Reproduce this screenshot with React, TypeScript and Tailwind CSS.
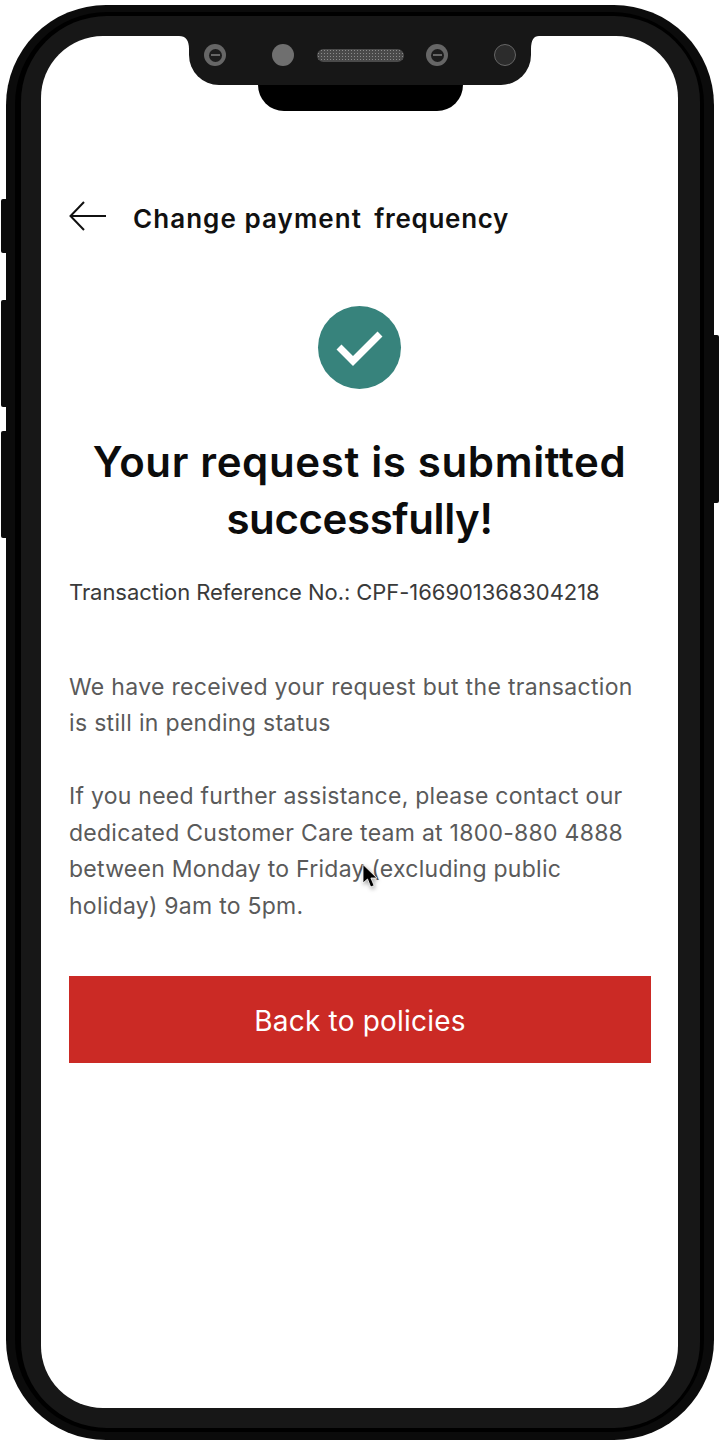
import React from "react";

const font = "font-['Inter','Liberation_Sans',sans-serif]";

const Lens = () => (
  <div className="size-[22px] rounded-full bg-[#666] flex items-center justify-center">
    <div className="size-[13px] rounded-full bg-[#1c1c1c] flex items-center justify-center">
      <div className="w-[9px] h-[2px] bg-[#666]" />
    </div>
  </div>
);

const Notch = () => (
  <div className="absolute left-[148px] top-0 w-[342px]">
    <svg className="absolute -left-[10px] top-0" width="10" height="13" viewBox="0 0 10 13">
      <path d="M0 0H10V13Q10 0 0 0Z" fill="#171717" />
    </svg>
    <svg className="absolute -right-[8px] top-0" width="8" height="13" viewBox="0 0 8 13">
      <path d="M8 0H0V13Q0 0 8 0Z" fill="#171717" />
    </svg>
    <div className="relative z-10 h-[49px] bg-[#171717] rounded-b-[30px] flex items-start pl-[15px] pt-[8px]">
      <Lens />
      <div className="ml-[46px] size-[22px] rounded-full bg-[#6f6f6f]" />
      <div className="ml-[23px] mt-[5px] w-[87px] h-[13px] rounded-full bg-[#4a4a4a] bg-[radial-gradient(#8c8c8c_1px,transparent_1px)] bg-[length:3px_3px]" />
      <div className="ml-[22px]">
        <Lens />
      </div>
      <div className="ml-[46px] size-[22px] rounded-full bg-[#2c2c2c] border border-[#666]" />
    </div>
    <div className="ml-[69px] w-[205px] h-[26px] bg-black rounded-b-[26px]" />
  </div>
);

const Cursor = () => (
  <svg
    className="absolute left-[321px] top-[828px] drop-shadow-[1px_2px_2px_rgba(0,0,0,0.35)]"
    width="16"
    height="25"
    viewBox="0 0 16 25"
  >
    <path d="M1 0.5v18.5l4.5-4 3.2 8 3.4-1.4-3.2-7.6h6z" fill="#000" stroke="#fff" strokeWidth="0.8" />
  </svg>
);

export default function App() {
  return (
    <div className={`${font} w-[722px] h-[1444px] bg-white relative pt-[5px] pl-[6px]`}>
      {/* side buttons */}
      <div className="absolute left-[1px] top-[199px] w-[6px] h-[54px] bg-[#0b0b0b] rounded-l-[2px]" />
      <div className="absolute left-[1px] top-[300px] w-[6px] h-[107px] bg-[#0b0b0b] rounded-l-[2px]" />
      <div className="absolute left-[1px] top-[431px] w-[6px] h-[107px] bg-[#0b0b0b] rounded-l-[2px]" />
      <div className="absolute left-[713px] top-[335px] w-[6px] h-[168px] bg-[#0b0b0b] rounded-r-[2px]" />

      {/* phone frame */}
      <div className="w-[708px] h-[1435px] bg-[#0b0b0b] rounded-[100px] pt-[7px] pb-[8px] pl-[9px] pr-[10px]">
        <div className="w-full h-full bg-black rounded-[92px] pt-[4px] pb-[4px] pl-[6px] pr-[4px]">
          <div className="w-full h-full bg-[#171717] rounded-[86px] pt-[20px] pb-[20px] pl-[20px] pr-[22px]">
            <div className="relative w-full h-full bg-white rounded-[62px] overflow-hidden px-[28px] pt-[161px] text-[#111]">
              <Notch />

              <div className="flex items-center h-[44px]">
                <svg className="-mt-[7px]" width="37" height="32" viewBox="0 0 37 32" fill="none" stroke="#111" strokeWidth="2">
                  <path d="M1 16h36M15 2 1.5 16 15 30" />
                </svg>
                <h2 className="ml-[27px] text-[26px] leading-[30px] font-semibold text-[#111] tracking-[0.7px] whitespace-nowrap">
                  <span className="tracking-[1.05px]">Change payment</span>
                  <span className="ml-[5px]"> frequency</span>
                </h2>
              </div>

              <div className="mt-[65px] flex justify-center">
                <div className="size-[83px] rounded-full bg-[#37837c] flex items-center justify-center">
                  <svg width="48" height="40" viewBox="0 0 48 40" fill="none" stroke="#fff" strokeWidth="7">
                    <path d="M3 19 17 33 44 6" />
                  </svg>
                </div>
              </div>

              <h1 className="mt-[44px] text-center text-[42px] leading-[57px] font-semibold text-[#0c0c0c] tracking-[0.64px]">
                Your request is submitted
                <br />
                <span className="tracking-[-0.4px]">successfully!</span>
              </h1>

              <p className="mt-[27px] text-[22px] leading-[36px] text-[#3a3a3a] tracking-[-0.06px]">
                Transaction Reference No.: CPF-166901368304218
              </p>

              <p className="mt-[59px] text-[23px] leading-[36px] text-[#5a5a5a] tracking-[0.32px]">
                We have received your request but the transaction
                <br />
                is still in pending status
              </p>

              <p className="mt-[37px] text-[23px] leading-[36.7px] text-[#5a5a5a] tracking-[0.26px]">
                If you need further assistance, please contact our
                <br />
                dedicated Customer Care team at 1800-880 4888
                <br />
                between Monday to Friday (excluding public
                <br />
                holiday) 9am to 5pm.
              </p>

              <button className="mt-[51px] w-[582px] h-[87px] pt-[3px] bg-[#cb2a25] text-white text-[28px] tracking-[0.2px] flex items-center justify-center">
                Back to policies
              </button>

              <Cursor />
            </div>
          </div>
        </div>
      </div>
    </div>
  );
}
